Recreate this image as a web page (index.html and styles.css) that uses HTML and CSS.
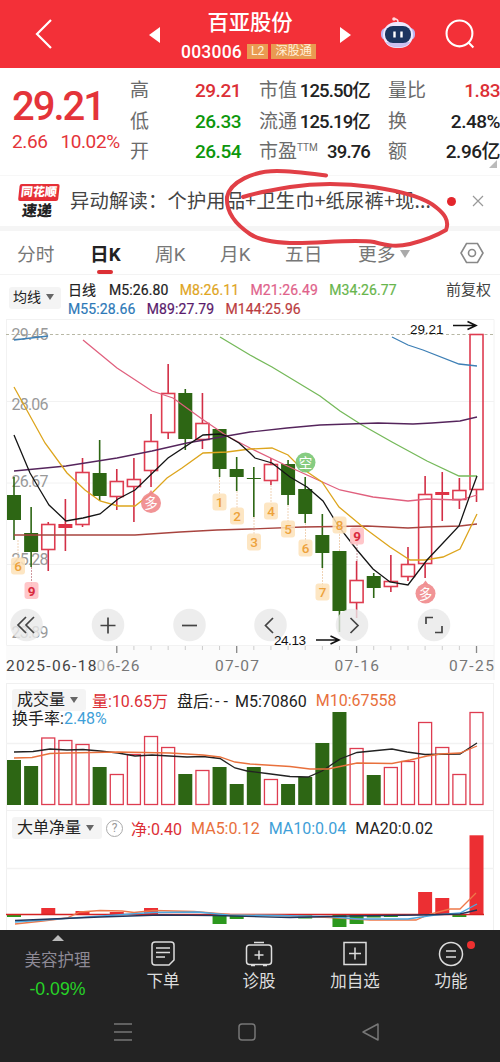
FILE: index.html
```html
<!DOCTYPE html>
<html lang="zh-CN">
  <head>
    <meta charset="UTF-8" />
    <meta name="viewport" content="width=device-width, initial-scale=1.0" />
    <title>百亚股份 003006</title>
    <link rel="stylesheet" href="styles.css">
  </head>
  <body>
    <header class="topbar">
      <svg class="back" viewBox="0 0 20 32"><path d="M17 2 3 16l14 14" /></svg>
      <i class="prev"></i>
      <div class="stock">
        <h1>百亚股份</h1>
        <p><b>003006</b><span>L2</span><span>深股通</span></p>
      </div>
      <i class="next"></i>
      <svg class="robot" viewBox="0 0 36 34">
        <path d="M18 6c0-2-1-3-3-3" fill="none" stroke="#ffd9df" stroke-width="1.5" />
        <circle cx="14" cy="3" r="1.8" fill="#ffd9df" />
        <rect x="1" y="12" width="34" height="12" rx="5" fill="#bcb5f2" />
        <rect x="3" y="6" width="30" height="26" rx="13" fill="#eee9ff" />
        <path d="M6 26c3 7 21 7 24 0z" fill="#ccc0ef" />
        <rect x="5" y="10" width="26" height="17" rx="8" fill="#1c3560" />
        <path d="M14.500 15.500v6M21.500 15.500v6" stroke="#fff" stroke-width="2.400" />
      </svg>
      <svg class="search" viewBox="0 0 30 30">
        <circle cx="14" cy="14" r="12.500" /><path d="m22.500 22.500 5 5" />
      </svg>
    </header>

    <section class="quote">
      <div class="price">
        <strong>29.21</strong>
        <p><span>2.66</span><span>10.02%</span></p>
      </div>
      <dl class="q1">
        <dt>高</dt><dd class="up">29.21</dd>
        <dt>低</dt><dd class="down">26.33</dd>
        <dt>开</dt><dd class="down">26.54</dd>
      </dl>
      <dl class="q2">
        <dt>市值</dt><dd>125.50亿</dd>
        <dt>流通</dt><dd>125.19亿</dd>
        <dt>市盈<sup>TTM</sup></dt><dd>39.76</dd>
      </dl>
      <dl class="q3">
        <dt>量比</dt><dd class="up">1.83</dd>
        <dt>换</dt><dd>2.48%</dd>
        <dt>额</dt><dd>2.96亿</dd>
      </dl>
      <i class="corner"></i>
    </section>

    <section class="news">
      <div class="logo"><b>同花顺</b><em>速递</em></div>
      <p>异动解读：个护用品+卫生巾+纸尿裤+现...</p>
      <i class="dot"></i>
      <svg class="close" viewBox="0 0 12 12"><path d="m1 1 10 10M11 1 1 11" /></svg>
      <svg class="scribble" viewBox="220 165 235 85">
        <path d="M326 175.500C306 173 291 171 277 171C253 171 230 182 227 197C226 211 235 224 250 234C261 241 277 243 297 243C322 243 354 239 374 242C389 246 397 247 410 244C422 241 436 236 446 230C450 220 443 213 437 208C426 198 400 191 373 187C343 183 316 183 290 187C271 190 256 193 243 197" />
      </svg>
    </section>

    <nav class="tabs">
      <a>分时</a>
      <a class="active">日K</a>
      <a>周K</a>
      <a>月K</a>
      <a>五日</a>
      <a>更多<i class="caret"></i></a>
      <svg class="gear" viewBox="0 0 24 22">
        <path d="M6.500 1.500h11L23 11l-5.500 9.500h-11L1 11z" /><circle cx="12" cy="11" r="3.500" />
      </svg>
    </nav>

    <section class="legend">
      <div class="pick">均线<i class="caret"></i></div>
      <div class="mas">
        <p><span>日线</span><span>M5:26.80</span><span class="m8">M8:26.11</span><span class="m21">M21:26.49</span><span class="m34">M34:26.77</span></p>
        <p><span class="m55">M55:28.66</span><span class="m89">M89:27.79</span><span class="m144">M144:25.96</span></p>
      </div>
      <span class="adjust">前复权</span>
    </section>

    <svg class="kline" viewBox="0 319 500 364">
      <defs>
        <linearGradient id="fade"><stop offset=".75" stop-color="#fbfbfb" /><stop offset="1" stop-color="#fbfbfb" stop-opacity="0" /></linearGradient>
      </defs>
      <rect x="6" y="646" width="488" height="34" fill="#fbfbfb" />
      <path class="grid" d="M6 319.500H494V680M6.500 319V645.500H494M6 401.500H494M6 483H494M6 564.500H494" />
      <path d="M6 334.500H494" stroke="#b7b7a4" stroke-dasharray="3 2.500" />
      <g class="scale">
        <text x="11.500" y="340" textLength="37">29.45</text>
        <text x="11.500" y="410" textLength="37">28.06</text>
        <text x="11.500" y="487" textLength="37">26.67</text>
        <text x="11.500" y="565" textLength="37">25.28</text>
        <text x="11.500" y="638" textLength="37">23.89</text>
      </g>
      <g id="stems"></g>
      <g id="candles"></g>
      <g class="lines">
        <path stroke="#3d7fb5" d="M14 340 48 336M392 337l16 8 15 5 36 14 18 2" />
        <path stroke="#75b95a" d="M220 337l30 18 22 12 48 29 20 15 22 14 30 17 35 19 32 15h18" />
        <path stroke="#a8443f" d="M14 535H135l45-3 37-2 33-1 53-2 64-1 41 2 19-1 33-1 17-2" />
        <path stroke="#55255c" d="M14 471l52-5 51-8 35-7 35-8 40-7 23-4 37-4 33-3 58-2 35 1 19-1 28-2 17-4" />
        <path stroke="#e0607e" d="M83 340l34 28 35 23 21 7 29 21 25 17 23 12 33 16 24 11 33 15 33 7 35 4 19-2 33 1 17-5" />
        <path stroke="#dda51d" d="M14 387l31 56 22 30 18 17 15 11 18 5h17l18-14 14-14 15-10 21-15 24-1 23-3 22-1 16 7 12 12 22 15 17 25 24 20 27 20 20 13h15l18-3 17-8 17-35" />
        <path stroke="#151515" d="M14 435l16 38 10 17 9 15 17 16 17-3 17-4 18-15 17-9 33-32 35-23 17-1 7 2 12 7 11 10 5 5 17 5 18 14 17 10 16 14 16 26 18 23 16 19 17 13 18 3 19-25 16-17 16-17 11-31 7-19" />
      </g>
      <g id="marks"></g>
      <g class="tools">
        <circle cx="26.500" cy="625" r="16.300" /><path d="m26 617-8 8 8 8M34 617l-8 8 8 8" />
        <circle cx="108" cy="625" r="16.300" /><path d="M100.500 625.500h15M108 617.500v16" />
        <circle cx="189.500" cy="625" r="16.300" /><path d="M182 625.500h15" />
        <circle cx="270.500" cy="625" r="16.300" /><path d="m273 618-7.500 7.500 7.500 7.500" />
        <circle cx="352" cy="625" r="16.300" /><path d="m350.500 618 7.500 7.500-7.500 7.500" />
        <circle cx="434" cy="625" r="16.300" /><path d="M426 624v-6.500h7M442 626v6.500h-7" />
      </g>
      <g class="note">
        <text x="410" y="334" textLength="33.500">29.21</text>
        <path d="M453 325.500h23M467.500 321.500l8.500 4-8.500 4" />
        <text x="274" y="644.500" textLength="32">24.13</text>
        <path d="M316 640h23M330.500 636l8.500 4-8.500 4" />
      </g>
      <g id="ticks"></g>
      <g class="dates">
        <text x="96.500" y="671" textLength="43">06-26</text>
        <rect x="6" y="655" width="108" height="22" fill="url(#fade)" />
        <text x="6" y="671" textLength="90.500" class="first">2025-06-18</text>
        <text x="215" y="671" textLength="44">07-07</text>
        <text x="334.500" y="671" textLength="44.500">07-16</text>
        <text x="449" y="671" textLength="45">07-25</text>
      </g>
    </svg>

    <section class="panel volume">
      <div class="row">
        <div class="pick">成交量<i class="caret"></i></div>
        <span class="up">量:10.65万</span><span class="after">盘后:<u>--</u>M5:70860</span><span class="orange">M10:67558</span>
      </div>
      <div class="row second">换手率:<span class="blue">2.48%</span></div>
      <svg viewBox="0 731 500 76">
        <path class="grid" d="M6 743.500H494" />
        <g id="volume"></g>
        <path stroke="#222" d="M14 752l19-.5 17-2.500 17 1 16-.5 17 1.500 18 2 17 3 17-1 35 2 16-.5 17 2 15 9.500 12 3 20 2.500 23 3 18 .5 14-6 18-12 17-6.500 35-3.500 15 3 18 2.500 35-.5 17-11" />
        <path stroke="#e8703c" d="M14 758l18-.5 18-4 17-.5 51-1 52 1 33 2 17 2 15 5 15 2 40 2.500 20 2.500h18l29-6 35 .5 18-3.500 17-4 13-2 20-1 17-7" />
      </svg>
    </section>

    <section class="panel net">
      <div class="row">
        <div class="pick">大单净量<i class="caret"></i></div>
        <i class="help">?</i>
        <span class="up">净:0.40</span><span class="orange">MA5:0.12</span><span class="blue">MA10:0.04</span><span>MA20:0.02</span>
      </div>
      <svg viewBox="0 831 500 99">
        <path class="grid" d="M6 868.500H494" />
        <g id="net"></g>
        <path stroke="#d52222" d="M6 914.500H484" />
        <path stroke="#ee784a" d="M15 924l28-3 24-3 13-6 20-1.500 22 .5 12 1.500 20-2 40 1 36 3 55 1 45 2 40 2.500h46l14-6 20-5h10l16-16" />
        <path stroke="#4ba9e2" d="M15 922l65-4.500 43-3 30-2 45-.5 30 3 50 .5 50 1 30 2.500h50l27-4 25-2 17-9" />
        <path stroke="#23365a" d="M15 920.500l85-3.500 60-2 55 .500 75 2 60-1.500 70-1 40-1 17-4" />
      </svg>
    </section>

    <footer>
      <div class="menu">
        <div class="sector"><i></i><p>美容护理</p><b>-0.09%</b></div>
        <div>
          <svg viewBox="0 0 28 28"><path d="M6 2h16q3 0 3 3v15l-5 5H6q-3 0-3-3V5q0-3 3-3zM7 8h14M7 12.500h14M7 17h9" /></svg>
          <p>下单</p>
        </div>
        <div>
          <svg viewBox="0 0 28 28"><rect x="1.500" y="5" width="25" height="19.500" rx="3" /><path d="M9 2.500h10M14 10.500v9M9.500 15h9M6 25.500h4M18 25.500h4" /></svg>
          <p>诊股</p>
        </div>
        <div>
          <svg viewBox="0 0 28 28"><path d="M3 2.500h22v22H3zM14 7.500v12M8 13.500h12" /></svg>
          <p>加自选</p>
        </div>
        <div class="feature">
          <svg viewBox="0 0 28 28"><circle cx="14" cy="14" r="11.500" /><path d="M9 11h10M9 17h10" /></svg>
          <p>功能</p>
        </div>
      </div>
      <div class="system">
        <svg viewBox="0 0 20 20"><path d="M1 2h18M1 10h18M1 18h18" /></svg>
        <svg viewBox="0 0 20 20"><rect x="2" y="2" width="16" height="16" rx="3" /></svg>
        <svg viewBox="0 0 20 20"><path d="M17 2v16L2 10z" stroke-linejoin="round" /></svg>
      </div>
    </footer>

    <script>
      const STEP = 17.13;
      const center = (i) => 14 + i * STEP;

      // type (g green, r hollow red, s solid red), high, body top, body bottom, low
      const days = [
        ["g", 477, 495, 520, 540], ["g", 507, 533, 552, 567],
        ["r", 522, 524, 550, 571], ["s", 499, 524, 528, 551],
        ["r", 458, 472, 525, 527], ["g", 440, 473, 496, 501],
        ["r", 469, 481, 497, 510], ["r", 458, 479, 487, 522],
        ["r", 414, 441, 471, 487], ["r", 364, 393, 433, 439],
        ["g", 389, 393, 439, 450], ["r", 393, 423, 440, 449],
        ["g", 429, 429, 469, 477], ["g", 457, 469, 477, 491],
        ["g", 467, 478, 479, 517], ["r", 458, 464, 481, 485],
        ["g", 460, 464, 495, 505], ["g", 477, 489, 514, 523],
        ["g", 514, 535, 553, 568], ["g", 551, 551, 611, 632],
        ["r", 561, 580, 603, 618], ["g", 573, 576, 588, 598],
        ["r", 555, 581, 587, 592], ["r", 547, 564, 577, 581],
        ["r", 476, 494, 564, 578], ["s", 472, 492, 495, 521],
        ["r", 478, 490, 500, 509], ["r", 334, 334, 490, 502],
      ];
      const volumes = [760, 766, 737.5, 740, 744, 767, 774, 754, 736, 747, 774, 770, 767, 784,
        767, 779, 784, 777, 743, 712, 748, 775, 767, 761, 722, 747, 774, 712];
      const net = { 0: 917, 2: 908, 4: 911, 6: 912, 8: 908, 12: 924, 13: 919, 17: 918.5, 19: 927,
        20: 924, 21: 917.5, 22: 917, 24: 892, 25: 898, 26: 917, 27: 835.3 };
      // label, x, y, kind, stem start
      const marks = [
        ["6", 18, 566, "o", 540], ["9", 31.5, 590.5, "p", 567], ["多", 151, 503, "buy"],
        ["1", 219.5, 502, "o", 477], ["2", 237, 516, "o", 491], ["3", 254, 542, "o", 517],
        ["4", 271, 511, "o", 485], ["5", 288, 529, "o", 505], ["6", 305.5, 548, "o", 523],
        ["7", 322.5, 592, "o", 568], ["8", 339.5, 525, "o", 551], ["9", 357, 536, "p", 561],
        ["空", 305.5, 462.5, "sell"], ["多", 425.5, 593.5, "buy"],
      ];

      const put = (id, html) => (document.getElementById(id).innerHTML = html);

      function box(kind, x, top, bottom) {
        if (kind === "r") {
          return `<rect class="hollow" x="${x - 6.5}" y="${top + 0.5}" width="13" height="${bottom - top - 1}"/>`;
        }
        return `<rect class="${kind}" x="${x - 7}" y="${top}" width="14" height="${bottom - top}"/>`;
      }

      put("candles", days.map(([kind, high, top, bottom, low], i) => {
        const x = center(i);
        return `<path class="wick-${kind}" d="M${x} ${high}V${top}M${x} ${bottom}V${low}"/>` + box(kind, x, top, bottom);
      }).join(""));

      put("volume", days.map(([kind], i) => box(kind === "s" ? "r" : kind, center(i), volumes[i], 805)).join(""));

      put("net", Object.keys(net).map((i) => {
        const up = net[i] < 914;
        return box(up ? "plus" : "minus", center(i), up ? net[i] : 914.5, up ? 914.5 : net[i]);
      }).join(""));

      put("stems", marks.filter((m) => m[4]).map(([, x, y, kind, from]) =>
        `<path class="stem-${kind}" d="M${x} ${from}V${y}"/>`).join(""));

      put("marks", marks.map(([label, x, y, kind]) => {
        const shape = kind === "buy" || kind === "sell"
          ? `<circle cx="${x}" cy="${y}" r="10"/>` + (kind === "buy" ? `<path d="M${x - 3} ${y - 9}l3-4 3 4z"/>` : "")
          : `<rect x="${x - 7}" y="${y - 8.5}" width="14" height="17" rx="3"/>`;
        return `<g class="mark ${kind}">${shape}<text x="${x}" y="${y + 5}">${label}</text></g>`;
      }).join(""));

      let ticks = "";
      for (let i = 6; i < 28; i++) {
        const major = [6, 13, 20, 27].includes(i);
        ticks += `<path class="${major ? "major" : ""}" d="M${center(i)} 646v${major ? 7 : 4}"/>`;
      }
      put("ticks", ticks);
    </script>
  </body>
</html>
```
FILE: styles.css
```css
* {
  box-sizing: border-box;
}

body {
  margin: 0;
  width: 500px;
  height: 1062px;
  overflow: hidden;
  background: #fff;
  color: #222;
  font-family: Roboto, "Noto Sans CJK SC", sans-serif;
}

h1, p, dl, dd {
  margin: 0;
}

i, em {
  font-style: normal;
}

svg {
  display: block;
  flex: none;
  fill: none;
}

/* header */
.topbar {
  display: flex;
  align-items: center;
  height: 68px;
  background: #f33038;
  color: #fff;
}

.back {
  width: 20px;
  height: 32px;
  margin-left: 34px;
  stroke: #fff;
  stroke-width: 2.2;
}

.prev, .next {
  border: 8px solid transparent;
  border-left-width: 0;
  border-right: 11px solid #fff;
  margin-left: 95px;
  margin-top: 2px;
}

.next {
  border-right-width: 0;
  border-left: 11px solid #fff;
  margin-left: 0;
}

.stock {
  width: 180px;
  text-align: center;
}

.stock h1 {
  font-size: 21.3px;
  line-height: 28px;
  font-weight: 500;
  margin-top: 6px;
}

.stock p {
  display: flex;
  justify-content: center;
  align-items: center;
  height: 27px;
  margin-top: 1px;
}

.stock b {
  font-size: 17.5px;
  font-weight: 500;
  letter-spacing: .2px;
  margin-right: 5px;
}

.stock span {
  background: #e99a52;
  color: #fff0d8;
  font-size: 12.2px;
  line-height: 15px;
  padding: 0 4px;
  margin-right: 3px;
}

.robot {
  width: 36px;
  height: 34px;
  margin-left: 29px;
  margin-top: -2px;
}

.search {
  width: 31px;
  height: 31px;
  margin-left: 29px;
  margin-top: 1px;
  stroke: #fff;
  stroke-width: 2;
}

/* quote */
.quote {
  position: relative;
  display: flex;
  height: 107px;
  padding-top: 8px;
}

.price {
  flex: none;
  width: 130px;
  padding-left: 12px;
  color: #e4343a;
}

.price strong {
  display: block;
  font-size: 40px;
  line-height: 46px;
  font-weight: 500;
  letter-spacing: -2px;
  margin-top: 8px;
}

.price p {
  display: flex;
  gap: 13px;
  font-size: 19px;
  line-height: 24px;
  letter-spacing: -.4px;
}

dl {
  flex: none;
  display: grid;
  grid-template-columns: auto minmax(0, 1fr);
  grid-auto-rows: 30.5px;
  line-height: 30px;
}

dt {
  font-size: 19px;
  color: #6b6b6b;
  white-space: nowrap;
}

dt sup {
  font-size: 10px;
  line-height: 0;
  vertical-align: 7px;
}

dd {
  display: flex;
  justify-content: flex-end;
  font-size: 19px;
  font-weight: 500;
  letter-spacing: -.5px;
  white-space: nowrap;
}

.q1 {
  width: 111px;
}

.q2 {
  width: 111px;
  margin-left: 18px;
}

.q2 dd {
  font-size: 18.5px;
  letter-spacing: -.85px;
}

.q3 {
  width: 112px;
  margin-left: 18px;
}

.up {
  color: #dc2f36;
}

.down {
  color: #0c970c;
}

.corner {
  position: absolute;
  right: 3px;
  bottom: 7px;
  border: 4px solid #bbb;
  border-top-color: transparent;
  border-left-color: transparent;
}

/* news */
.news {
  position: relative;
  display: flex;
  align-items: center;
  height: 56px;
  border-top: 1px solid #f7f7f7;
  border-bottom: 5px solid #f5f5f5;
}

.logo {
  width: 40px;
  margin-left: 18px;
  margin-right: 1px;
  text-align: center;
  transform: skewX(-6deg);
}

.logo b {
  display: block;
  background: #e62f37;
  border-radius: 2px;
  color: #fff;
  font-size: 12px;
  line-height: 17px;
  font-weight: 900;
}

.logo em {
  display: block;
  font-size: 15px;
  line-height: 17px;
  font-weight: 900;
  font-family: "Noto Sans CJK SC", sans-serif;
}

.news p {
  width: 368px;
  margin-left: 11px;
  margin-top: -2px;
  font-size: 19.3px;
  letter-spacing: .2px;
  white-space: nowrap;
  color: #444;
  font-family: "Noto Sans CJK SC", sans-serif;
}

.dot {
  width: 9px;
  height: 9px;
  margin-left: 9px;
  border-radius: 50%;
  background: #e3262c;
}

.close {
  width: 12px;
  height: 12px;
  margin-left: 16px;
  stroke: #999;
  stroke-width: 1.2;
}

.scribble {
  position: absolute;
  left: 220px;
  top: -11px;
  width: 235px;
  height: 85px;
  z-index: 2;
  stroke: #e13f46;
  stroke-width: 4;
  stroke-linecap: round;
}

/* tabs */
.tabs {
  display: flex;
  align-items: center;
  height: 44px;
  padding-left: 17px;
  border-bottom: 1px solid #f3f3f3;
  color: #777;
  font-size: 18.7px;
}

.tabs a {
  position: relative;
  width: 65px;
  white-space: nowrap;
}

.tabs a:nth-child(1),
.tabs a:nth-child(5) {
  width: 73px;
}

.tabs .active {
  color: #222;
  font-weight: 700;
}

.active::after {
  content: "";
  position: absolute;
  left: 7px;
  bottom: -8px;
  width: 16px;
  height: 4px;
  border-radius: 2px;
  background: #dc3035;
}

.caret {
  display: inline-block;
  border: 4.5px solid transparent;
  border-top: 6px solid #666;
  border-bottom: 0;
  margin-left: 5px;
  vertical-align: 2px;
}

.tabs .caret {
  border-width: 8px 5.5px 0;
  border-top-color: #aaa;
  vertical-align: 3px;
}

.gear {
  width: 24px;
  height: 22px;
  margin-left: 37px;
  stroke: #888;
  stroke-width: 1.6;
}

/* average legend */
.legend {
  display: flex;
  height: 44px;
  padding-top: 6px;
  font-size: 14px;
}

.pick {
  background: #f4f4f4;
  border-radius: 3px;
  white-space: nowrap;
}

.legend .pick {
  width: 52px;
  height: 22px;
  margin: 6px 7px 0 9px;
  padding-left: 4px;
  line-height: 21px;
}

.mas {
  width: 378px;
}

.mas p {
  display: flex;
  gap: 11.3px;
  line-height: 19px;
  letter-spacing: .1px;
}

.mas p:first-child span:first-child {
  margin-right: 1.5px;
}

.m8 { color: #e0a51e; }
.m21 { color: #e0628a; }
.m34 { color: #68b54c; }
.m55 { color: #2d79b8; }
.m89 { color: #5a1b6c; }
.m144 { color: #bb3c40; }

.mas span {
  -webkit-text-stroke: .2px;
}

.adjust {
  font-size: 15px;
  line-height: 19px;
  color: #444;
  white-space: nowrap;
}

/* candles */
.kline {
  width: 500px;
  height: 364px;
}

.grid {
  stroke: #f2f2f2;
}

.scale {
  fill: #999;
  font-size: 16px;
}

.lines, .panel svg {
  stroke-width: 1.3;
}

.g { fill: #2d6614; }
.s { fill: #de3246; }
.plus { fill: #ec2f33; }
.minus { fill: #2c981e; }

.hollow {
  stroke: #de3c50;
  stroke-width: 1.3;
}

.kline .hollow {
  stroke-width: 1.6;
}

.wick-g {
  stroke: #2d6614;
  stroke-width: 1.6;
}

.wick-r, .wick-s {
  stroke: #d22f46;
  stroke-width: 1.6;
}

.stem-o {
  stroke: #f0d3b5;
  stroke-dasharray: 2 1;
}

.stem-p {
  stroke: #d09aa0;
  stroke-dasharray: 2 1;
}

.mark text {
  font-size: 13.5px;
  font-weight: 500;
  text-anchor: middle;
}

.o rect { fill: #fde2b8; fill-opacity: .85; }
.o text { fill: #eda23b; }
.p rect { fill: #ffc0c3; fill-opacity: .9; }
.p text { fill: #d92a3e; font-weight: 700; }
.buy circle, .buy path { fill: #f0888b; fill-opacity: .9; }
.sell circle { fill: #79c673; fill-opacity: .9; }
.buy text, .sell text { fill: #fff; font-weight: 400; }

.note {
  font-family: "Liberation Sans", sans-serif;
  font-size: 13.5px;
}

.note text {
  fill: #111;
}

.note path {
  stroke: #111;
  stroke-width: 1.6;
}

.tools circle {
  fill: #e8e8e8;
  fill-opacity: .8;
}

.tools path {
  stroke: #444;
  stroke-width: 1.7;
}

#ticks {
  stroke: #ccc;
}

#ticks .major {
  stroke: #888;
  stroke-width: 1.3;
}

.dates {
  font-size: 15.5px;
}

.dates text {
  fill: #777;
}

.dates .first {
  fill: #444;
}

/* indicator panels */
.panel {
  width: 488px;
  margin-left: 6px;
  border: 1px solid #f0f0f0;
  border-bottom: 0;
  font-size: 16px;
}

.panel svg {
  width: 500px;
  margin-left: -7px;
  overflow: visible;
}

.row {
  display: flex;
  align-items: center;
  height: 22px;
  padding-left: 5px;
  white-space: nowrap;
}

.row .pick {
  height: 22px;
  padding-left: 5px;
  line-height: 22px;
}

.volume {
  height: 127px;
}

.volume .row:first-child {
  margin-top: 5px;
}

.volume .pick {
  width: 74px;
  margin-right: 6px;
}

.volume .second {
  height: 20px;
  line-height: 20px;
  margin-top: -2px;
}

.volume svg {
  height: 76px;
  margin-top: 2px;
}

.after {
  margin: 0 9px 0 9px;
}

.after u {
  text-decoration: none;
  display: inline-block;
  width: 22px;
  letter-spacing: 4px;
  padding-left: 2px;
}

.orange { color: #e8703c; }
.blue { color: #3f9fd8; }

.net {
  height: 120px;
}

.net .row {
  gap: 9px;
  margin-top: 6px;
}

.net .pick {
  width: 90px;
  margin-right: -5px;
}

.help {
  width: 17px;
  height: 17px;
  margin-right: -1px;
  border: 1px solid #aaa;
  border-radius: 50%;
  color: #999;
  font-size: 12px;
  line-height: 15px;
  text-align: center;
}

.net svg {
  height: 99px;
  margin-top: -8px;
}

/* bottom */
footer {
  position: relative;
  height: 132px;
  background: #232323;
  color: #ddd;
}

.menu {
  display: flex;
  height: 75px;
  padding-left: 9px;
}

.menu > div {
  position: relative;
  width: 96px;
  padding-top: 10px;
  text-align: center;
}

.menu svg {
  width: 28px;
  height: 28px;
  margin: 0 auto;
  stroke: #ddd;
  stroke-width: 1.5;
}

.menu p {
  font-size: 16.5px;
  line-height: 24px;
}

.menu svg + p {
  margin-top: 2px;
}

.menu .sector {
  width: 106px;
  padding: 5px 9px 0 0;
}

.sector i {
  display: block;
  width: 0;
  margin: 0 auto;
  border: 6px solid transparent;
  border-top: 0;
  border-bottom-color: #bbb;
}

.sector p {
  margin-top: 8px;
  color: #8e8a96;
}

.sector b {
  display: block;
  font: 17.7px/24px "Liberation Sans", sans-serif;
  color: #27d327;
  margin-top: 4px;
}

.feature::after {
  content: "";
  position: absolute;
  top: 11px;
  left: 64px;
  width: 8px;
  height: 8px;
  border-radius: 50%;
  background: #ee3030;
}

.system {
  display: flex;
  gap: 104px;
  padding: 17px 0 0 113px;
}

.system svg {
  width: 20px;
  height: 20px;
  stroke: #777;
  stroke-width: 1.5;
}
```
